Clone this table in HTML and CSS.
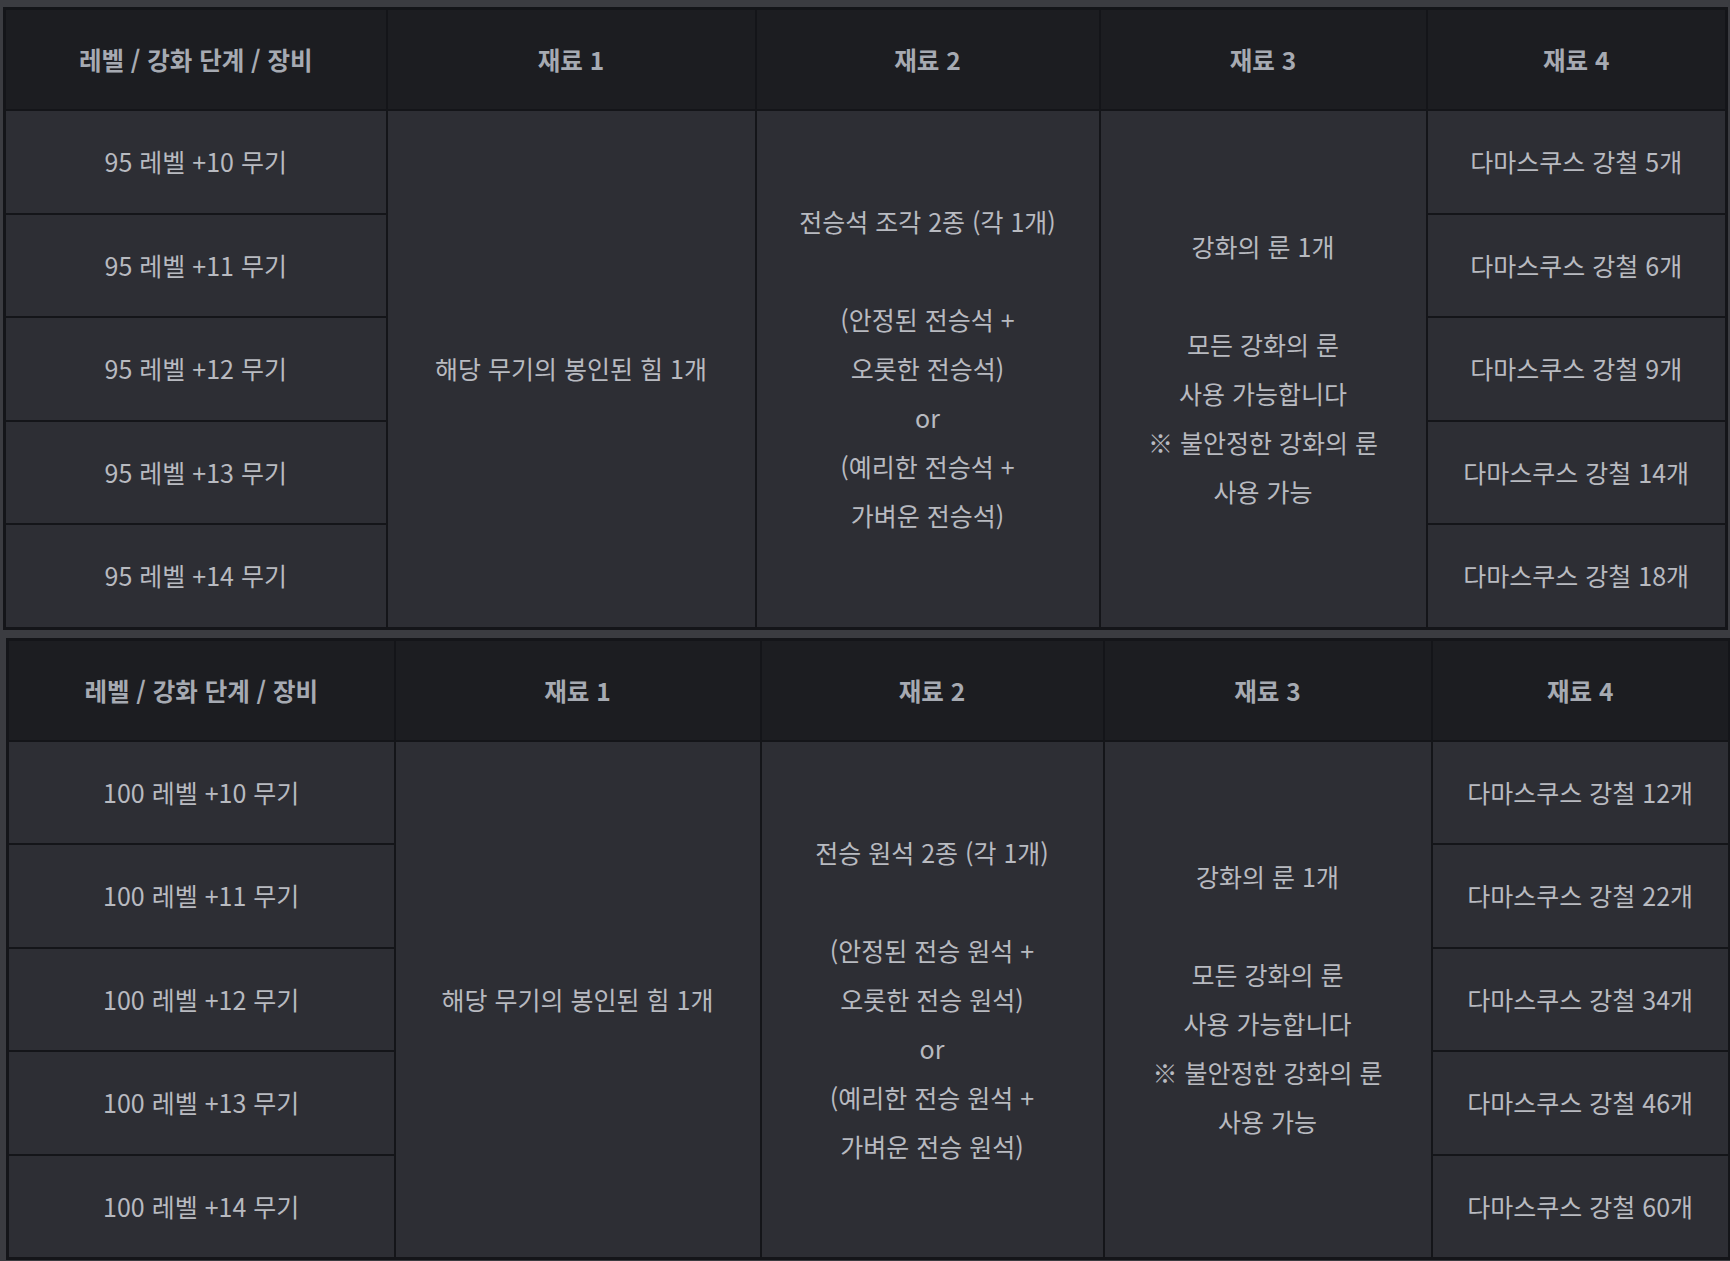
FILE: index.html
```html
<!DOCTYPE html>
<html lang="ko">
<head>
  <meta charset="UTF-8" />
  <meta name="viewport" content="width=device-width, initial-scale=1.0"/>
  <title>무기 강화 재료</title>
  <link rel="stylesheet" href="styles.css">
</head>
<body>

<div class="tables">

  <table class="mat-table first">
    <colgroup>
      <col class="c1"><col class="c2"><col class="c3"><col class="c4"><col class="c5">
    </colgroup>
    <thead>
      <tr>
        <th>레벨 / 강화 단계 / 장비</th>
        <th>재료 1</th>
        <th>재료 2</th>
        <th>재료 3</th>
        <th>재료 4</th>
      </tr>
    </thead>
    <tbody>
      <tr>
        <td>95 레벨 +10 무기</td>
        <td rowspan="5">해당 무기의 봉인된 힘 1개</td>
        <td rowspan="5">전승석 조각 2종 (각 1개)<br><br>(안정된 전승석 +<br>오롯한 전승석)<br>or<br>(예리한 전승석 +<br>가벼운 전승석)</td>
        <td rowspan="5">강화의 룬 1개<br><br>모든 강화의 룬<br>사용 가능합니다<br>※ 불안정한 강화의 룬<br>사용 가능</td>
        <td>다마스쿠스 강철 5개</td>
      </tr>
      <tr>
        <td>95 레벨 +11 무기</td>
        <td>다마스쿠스 강철 6개</td>
      </tr>
      <tr>
        <td>95 레벨 +12 무기</td>
        <td>다마스쿠스 강철 9개</td>
      </tr>
      <tr>
        <td>95 레벨 +13 무기</td>
        <td>다마스쿠스 강철 14개</td>
      </tr>
      <tr>
        <td>95 레벨 +14 무기</td>
        <td>다마스쿠스 강철 18개</td>
      </tr>
    </tbody>
  </table>

  <table class="mat-table second">
    <colgroup>
      <col class="c1"><col class="c2"><col class="c3"><col class="c4"><col class="c5">
    </colgroup>
    <thead>
      <tr>
        <th>레벨 / 강화 단계 / 장비</th>
        <th>재료 1</th>
        <th>재료 2</th>
        <th>재료 3</th>
        <th>재료 4</th>
      </tr>
    </thead>
    <tbody>
      <tr>
        <td>100 레벨 +10 무기</td>
        <td rowspan="5">해당 무기의 봉인된 힘 1개</td>
        <td rowspan="5">전승 원석 2종 (각 1개)<br><br>(안정된 전승 원석 +<br>오롯한 전승 원석)<br>or<br>(예리한 전승 원석 +<br>가벼운 전승 원석)</td>
        <td rowspan="5">강화의 룬 1개<br><br>모든 강화의 룬<br>사용 가능합니다<br>※ 불안정한 강화의 룬<br>사용 가능</td>
        <td>다마스쿠스 강철 12개</td>
      </tr>
      <tr>
        <td>100 레벨 +11 무기</td>
        <td>다마스쿠스 강철 22개</td>
      </tr>
      <tr>
        <td>100 레벨 +12 무기</td>
        <td>다마스쿠스 강철 34개</td>
      </tr>
      <tr>
        <td>100 레벨 +13 무기</td>
        <td>다마스쿠스 강철 46개</td>
      </tr>
      <tr>
        <td>100 레벨 +14 무기</td>
        <td>다마스쿠스 강철 60개</td>
      </tr>
    </tbody>
  </table>

</div>

</body>
</html>
```

FILE: styles.css
```css
body {
  font-family: "Noto Sans CJK KR", "Noto Sans", sans-serif;
  margin: 0;
  padding: 0;
  background: #3b3c41;
  color: #b8bac0;
}

.tables {
  padding-top: 7px;
  display: flex;
  flex-direction: column;
  gap: 8px;
}

.mat-table {
  width: 1722px;
  border-collapse: collapse;
  table-layout: fixed;
  border: 3px solid #141519;
  font-size: 25px;
}

.mat-table.first {
  margin-left: 3px;
}

.mat-table.second {
  margin-left: 6px;
}

.first .c1 { width: 382px; }
.first .c2 { width: 369px; }
.first .c3 { width: 344px; }
.first .c4 { width: 327px; }
.first .c5 { width: 300px; }

.second .c1 { width: 387px; }
.second .c2 { width: 366px; }
.second .c3 { width: 343px; }
.second .c4 { width: 328px; }
.second .c5 { width: 298px; }

.mat-table th {
  background: #1c1d21;
  color: #a6aab2;
  font-weight: 700;
  font-size: 24.5px;
  height: 99px;
  padding: 0;
  border-left: 2px solid #141519;
}

.mat-table td {
  background: #2d2e34;
  text-align: center;
  vertical-align: middle;
  height: 101.5px;
  padding: 0;
  line-height: 49px;
  border: 2px solid #141519;
}

.mat-table th:first-child {
  border-left: none;
}
```
